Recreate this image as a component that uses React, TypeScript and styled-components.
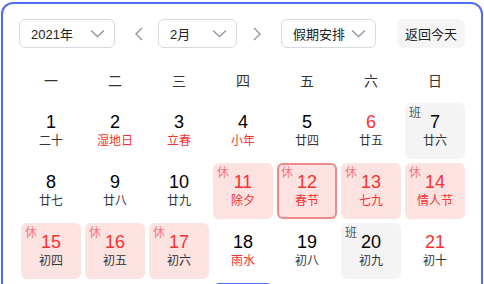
import React from "react";
import styled, { createGlobalStyle, css } from "styled-components";

const GlobalStyle = createGlobalStyle`
  html, body {
    margin: 0;
    padding: 0;
    background: #fff;
    overflow: hidden;
  }
  body {
    font-family: "Liberation Sans", "Noto Sans CJK SC", sans-serif;
  }
`;

const Frame = styled.div`
  margin: 2px 1px 0 1px;
  height: 320px;
  border: 2px solid #4e6ef2;
  border-radius: 12px;
  padding: 15px 16px 0 16px;
  box-sizing: border-box;
`;

const Toolbar = styled.div`
  display: flex;
  align-items: center;
  height: 29px;
`;

const Select = styled.div<{ $w: number }>`
  display: flex;
  align-items: center;
  justify-content: space-between;
  box-sizing: border-box;
  width: ${(p) => p.$w}px;
  height: 29px;
  padding: 0 9px 0 11px;
  border: 1px solid #d7d9e0;
  border-radius: 6px;
  font-size: 13px;
  color: #222;
`;

const ArrowBtn = styled.div<{ $ml: number; $mr: number }>`
  display: flex;
  align-items: center;
  justify-content: center;
  width: 24px;
  height: 29px;
  margin: 0 ${(p) => p.$mr}px 0 ${(p) => p.$ml}px;
`;

const TodayBtn = styled.div`
  display: flex;
  align-items: center;
  justify-content: center;
  width: 68px;
  height: 29px;
  margin-left: auto;
  border-radius: 6px;
  background: #f5f5f6;
  font-size: 13px;
  color: #222;
`;

const WeekHead = styled.div`
  display: grid;
  grid-template-columns: repeat(7, 60px);
  column-gap: 4px;
  margin: 12px 0 3px 2px;
  height: 40px;
  align-items: center;
`;

const WeekLabel = styled.div`
  text-align: center;
  font-size: 14px;
  color: #333;
`;

const Grid = styled.div`
  display: grid;
  grid-template-columns: repeat(7, 60px);
  grid-auto-rows: 56px;
  gap: 4px;
  margin-left: 2px;
`;

type Kind = "normal" | "rest" | "work";

const Cell = styled.div<{ $kind: Kind; $selected?: boolean; $today?: boolean }>`
  position: relative;
  display: flex;
  flex-direction: column;
  align-items: center;
  box-sizing: border-box;
  padding-top: 8px;
  border-radius: 6px;
  ${(p) =>
    p.$kind === "rest" &&
    css`
      background: #fde2e2;
    `}
  ${(p) =>
    p.$kind === "work" &&
    css`
      background: #f4f4f5;
    `}
  ${(p) =>
    p.$selected &&
    css`
      box-shadow: inset 0 0 0 2px #f08a8a;
    `}
  ${(p) =>
    p.$today &&
    css`
      box-shadow: inset 0 0 0 2px #4e6ef2;
    `}
`;

const DayNum = styled.div<{ $red: boolean }>`
  font-size: 18px;
  line-height: 22px;
  color: ${(p) => (p.$red ? "#f73131" : "#000")};
`;

const Lunar = styled.div<{ $red: boolean }>`
  font-size: 12px;
  line-height: 16px;
  color: ${(p) => (p.$red ? "#f73131" : "#333")};
`;

const Tag = styled.span<{ $kind: Kind }>`
  position: absolute;
  top: 2px;
  left: 4px;
  font-size: 12px;
  line-height: 16px;
  color: ${(p) => (p.$kind === "rest" ? "#f5777a" : "#555")};
`;

const Chevron = () => (
  <svg width="15" height="9" viewBox="0 0 15 9" fill="none">
    <path d="M1 1.5 L7.5 7.5 L14 1.5" stroke="#9195a3" strokeWidth="1.3" />
  </svg>
);

const Arrow = ({ dir }: { dir: "left" | "right" }) => (
  <svg width="10" height="14" viewBox="0 0 10 14" fill="none">
    <path
      d={dir === "left" ? "M8 1 L2 7 L8 13" : "M2 1 L8 7 L2 13"}
      stroke="#9195a3"
      strokeWidth="1.4"
    />
  </svg>
);

type Day = {
  n: number;
  lunar: string;
  kind?: Kind;
  redNum?: boolean;
  redLunar?: boolean;
  selected?: boolean;
};

const days: Day[] = [
  { n: 1, lunar: "二十" },
  { n: 2, lunar: "湿地日", redLunar: true },
  { n: 3, lunar: "立春", redLunar: true },
  { n: 4, lunar: "小年", redLunar: true },
  { n: 5, lunar: "廿四" },
  { n: 6, lunar: "廿五", redNum: true },
  { n: 7, lunar: "廿六", kind: "work" },
  { n: 8, lunar: "廿七" },
  { n: 9, lunar: "廿八" },
  { n: 10, lunar: "廿九" },
  { n: 11, lunar: "除夕", kind: "rest", redLunar: true },
  { n: 12, lunar: "春节", kind: "rest", redLunar: true, selected: true },
  { n: 13, lunar: "七九", kind: "rest", redLunar: true },
  { n: 14, lunar: "情人节", kind: "rest", redLunar: true },
  { n: 15, lunar: "初四", kind: "rest" },
  { n: 16, lunar: "初五", kind: "rest" },
  { n: 17, lunar: "初六", kind: "rest" },
  { n: 18, lunar: "雨水", redLunar: true },
  { n: 19, lunar: "初八" },
  { n: 20, lunar: "初九", kind: "work" },
  { n: 21, lunar: "初十", redNum: true },
];

// next week only peeks in at the bottom edge; the 4th cell is today
const nextWeek = [false, false, false, true, false, false, false];

const weekdays = ["一", "二", "三", "四", "五", "六", "日"];

const App = () => {
  return (
    <>
      <GlobalStyle />
      <Frame>
        <Toolbar>
          <Select $w={96}>
            <span>2021年</span>
            <Chevron />
          </Select>
          <ArrowBtn $ml={12} $mr={7}>
            <Arrow dir="left" />
          </ArrowBtn>
          <Select $w={79}>
            <span>2月</span>
            <Chevron />
          </Select>
          <ArrowBtn $ml={8} $mr={12}>
            <Arrow dir="right" />
          </ArrowBtn>
          <Select $w={95}>
            <span>假期安排</span>
            <Chevron />
          </Select>
          <TodayBtn>返回今天</TodayBtn>
        </Toolbar>
        <WeekHead>
          {weekdays.map((w) => (
            <WeekLabel key={w}>{w}</WeekLabel>
          ))}
        </WeekHead>
        <Grid>
          {days.map((d) => {
            const kind = d.kind ?? "normal";
            return (
              <Cell key={d.n} $kind={kind} $selected={d.selected}>
                {kind === "rest" && <Tag $kind={kind}>休</Tag>}
                {kind === "work" && <Tag $kind={kind}>班</Tag>}
                <DayNum $red={kind === "rest" || !!d.redNum}>{d.n}</DayNum>
                <Lunar $red={!!d.redLunar}>{d.lunar}</Lunar>
              </Cell>
            );
          })}
          {nextWeek.map((today, i) => (
            <Cell key={`next-${i}`} $kind="normal" $today={today} />
          ))}
        </Grid>
      </Frame>
    </>
  );
};

export default App;
